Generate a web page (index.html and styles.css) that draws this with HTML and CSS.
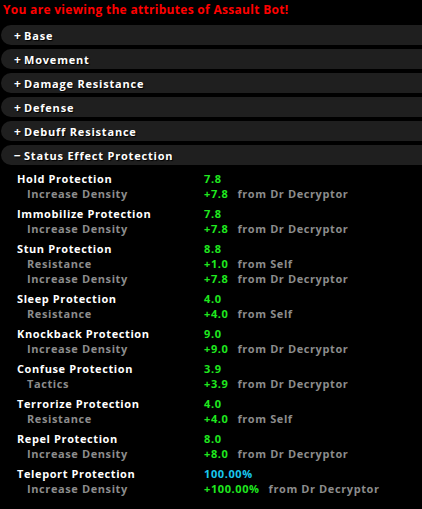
FILE: index.html
```html
<!DOCTYPE html>
<html>
<head>
<meta charset="utf-8">
<link rel="stylesheet" href="styles.css">
</head>
<body>
<div class="title">You are viewing the attributes of Assault Bot!</div>
<div class="sections">
  <div class="bar"><span class="sign">+</span>Base</div>
  <div class="bar"><span class="sign">+</span>Movement</div>
  <div class="bar"><span class="sign">+</span>Damage Resistance</div>
  <div class="bar"><span class="sign">+</span>Defense</div>
  <div class="bar"><span class="sign">+</span>Debuff Resistance</div>
  <div class="bar"><span class="sign minus">&minus;</span>Status Effect Protection</div>
</div>
<div class="list">
  <div class="group">
    <div class="row"><span class="name">Hold Protection</span><span class="val">7.8</span></div>
    <div class="row"><span class="sub">Increase Density</span><span class="val">+7.8</span><span class="src">from Dr Decryptor</span></div>
  </div>
  <div class="group">
    <div class="row"><span class="name">Immobilize Protection</span><span class="val">7.8</span></div>
    <div class="row"><span class="sub">Increase Density</span><span class="val">+7.8</span><span class="src">from Dr Decryptor</span></div>
  </div>
  <div class="group">
    <div class="row"><span class="name">Stun Protection</span><span class="val">8.8</span></div>
    <div class="row"><span class="sub">Resistance</span><span class="val">+1.0</span><span class="src">from Self</span></div>
    <div class="row"><span class="sub">Increase Density</span><span class="val">+7.8</span><span class="src">from Dr Decryptor</span></div>
  </div>
  <div class="group">
    <div class="row"><span class="name">Sleep Protection</span><span class="val">4.0</span></div>
    <div class="row"><span class="sub">Resistance</span><span class="val">+4.0</span><span class="src">from Self</span></div>
  </div>
  <div class="group">
    <div class="row"><span class="name">Knockback Protection</span><span class="val">9.0</span></div>
    <div class="row"><span class="sub">Increase Density</span><span class="val">+9.0</span><span class="src">from Dr Decryptor</span></div>
  </div>
  <div class="group">
    <div class="row"><span class="name">Confuse Protection</span><span class="val">3.9</span></div>
    <div class="row"><span class="sub">Tactics</span><span class="val">+3.9</span><span class="src">from Dr Decryptor</span></div>
  </div>
  <div class="group">
    <div class="row"><span class="name">Terrorize Protection</span><span class="val">4.0</span></div>
    <div class="row"><span class="sub">Resistance</span><span class="val">+4.0</span><span class="src">from Self</span></div>
  </div>
  <div class="group">
    <div class="row"><span class="name">Repel Protection</span><span class="val">8.0</span></div>
    <div class="row"><span class="sub">Increase Density</span><span class="val">+8.0</span><span class="src">from Dr Decryptor</span></div>
  </div>
  <div class="group">
    <div class="row"><span class="name">Teleport Protection</span><span class="val cyan">100.00%</span></div>
    <div class="row"><span class="sub">Increase Density</span><span class="val">+100.00%</span><span class="src">from Dr Decryptor</span></div>
  </div>
</div>
</body>
</html>
```
FILE: styles.css
```css
html, body {
  margin: 0;
  padding: 0;
  background: #000;
}
body {
  width: 422px;
  height: 509px;
  overflow: hidden;
  font-family: "Open Sans", "DejaVu Sans", sans-serif;
  font-weight: 700;
  font-size: 11px;
  letter-spacing: 0.6px;
}
.title {
  color: #f00;
  font-size: 12px;
  letter-spacing: 0.3px;
  line-height: 14px;
  padding: 3px 0 0 3px;
  height: 20px;
  box-sizing: border-box;
}
.sections {
  display: flex;
  flex-direction: column;
  gap: 4px;
  padding: 6px 0 0 1px;
  margin-top: -1px;
}
.bar {
  height: 20px;
  background: #1f1f1f;
  border-radius: 10px 0 0 10px;
  color: #fff;
  display: flex;
  align-items: center;
  padding-left: 13px;
  text-shadow: 1px 1px 1px #000;
  letter-spacing: 0.8px;
}
.sign {
  width: 10px;
  font-size: 12px;
}
.list {
  padding: 6px 0 0 17px;
}
.group {
  margin-bottom: 5px;
}
.row {
  display: flex;
  height: 15px;
  line-height: 15px;
  align-items: center;
  white-space: nowrap;
}
.name {
  color: #fff;
  width: 187px;
}
.sub {
  color: #8c8c8c;
  width: 177px;
  padding-left: 10px;
}
.val {
  color: #1fe81f;
}
.val.cyan {
  color: #19c8ee;
}
.src {
  color: #8c8c8c;
  margin-left: 9px;
}
```
